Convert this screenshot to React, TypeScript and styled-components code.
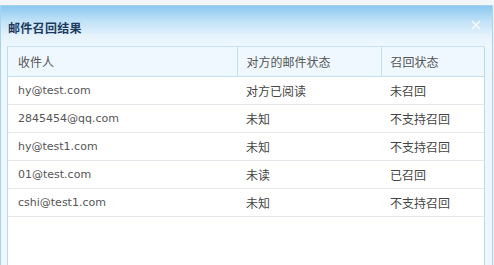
import styled, { createGlobalStyle } from "styled-components";

const GlobalStyle = createGlobalStyle`
  html, body {
    margin: 0;
    padding: 0;
    background: #f3f6f9;
  }
`;

const rows = [
  { mail: "hy@test.com", status: "对方已阅读", recall: "未召回" },
  { mail: "2845454@qq.com", status: "未知", recall: "不支持召回" },
  { mail: "hy@test1.com", status: "未知", recall: "不支持召回" },
  { mail: "01@test.com", status: "未读", recall: "已召回" },
  { mail: "cshi@test1.com", status: "未知", recall: "不支持召回" },
];

function App() {
  return (
    <>
      <GlobalStyle />
      <Page>
        <Dialog>
          <Header>
            <Title>邮件召回结果</Title>
            <Close aria-label="close">
              <svg width="10" height="10" viewBox="0 0 10 10">
                <path d="M1 1L9 9M9 1L1 9" stroke="#ffffff" strokeWidth="1.6" strokeOpacity="0.85" />
              </svg>
            </Close>
          </Header>
          <Body>
            <Table>
              <colgroup>
                <col style={{ width: 229 }} />
                <col style={{ width: 144 }} />
                <col />
              </colgroup>
              <thead>
                <tr>
                  <Th>收件人</Th>
                  <Th>对方的邮件状态</Th>
                  <Th>召回状态</Th>
                </tr>
              </thead>
              <tbody>
                {rows.map((r, key) => (
                  <tr key={key}>
                    <MailCell>{r.mail}</MailCell>
                    <Td>{r.status}</Td>
                    <Td>{r.recall}</Td>
                  </tr>
                ))}
              </tbody>
            </Table>
          </Body>
        </Dialog>
      </Page>
    </>
  );
}

const Page = styled.div`
  padding-top: 5px;
  width: 494px;
  height: 265px;
  box-sizing: border-box;
  overflow: hidden;
`;

const Dialog = styled.div`
  width: 493px;
  height: 270px;
  box-sizing: border-box;
  border: 1px solid #a7d3f0;
  border-bottom: none;
  background: linear-gradient(to bottom, #8ac8ef 0px, #bde0f7 14px, #e6f3fc 30px, #eef7fd 40px);
  display: flex;
  flex-direction: column;
`;

const Header = styled.div`
  height: 40px;
  padding: 0 7px;
  display: flex;
  align-items: center;
  justify-content: space-between;
`;

const Title = styled.h2`
  margin: 2px 0 0 0;
  font-family: "Noto Sans CJK SC", sans-serif;
  font-size: 12px;
  font-weight: 700;
  color: #1d3b5e;
  letter-spacing: 0.3px;
`;

const Close = styled.span`
  display: flex;
  margin: -3px 4px 0 0;
`;

const Body = styled.div`
  flex: 1;
  margin: 0 7px 0 6px;
  background: #ffffff;
  border-left: 1px solid #b6dbf2;
  border-right: 1px solid #b6dbf2;
  border-top: 1px solid #c9e3f3;
`;

const Table = styled.table`
  width: 100%;
  table-layout: fixed;
  border-collapse: collapse;
`;

const Th = styled.th`
  height: 29px;
  padding: 0 0 0 9px;
  text-align: left;
  font-family: "Noto Sans CJK SC", sans-serif;
  font-size: 12px;
  font-weight: 400;
  color: #555555;
  background: #eff8fe;
  border-bottom: 1px solid #c4e1f3;
  & + & {
    border-left: 1px solid #c4e1f3;
  }
  &:first-child {
    padding-left: 10px;
  }
`;

const Td = styled.td`
  height: 27px;
  padding: 0 0 0 9px;
  font-family: "Noto Sans CJK SC", sans-serif;
  font-size: 12px;
  color: #444444;
  border-bottom: 1px solid #e4e8ec;
`;

const MailCell = styled(Td)`
  padding-left: 10px;
  font-family: "DejaVu Sans", "Noto Sans CJK SC", sans-serif;
  font-size: 11px;
  color: #555555;
`;

export default App;
